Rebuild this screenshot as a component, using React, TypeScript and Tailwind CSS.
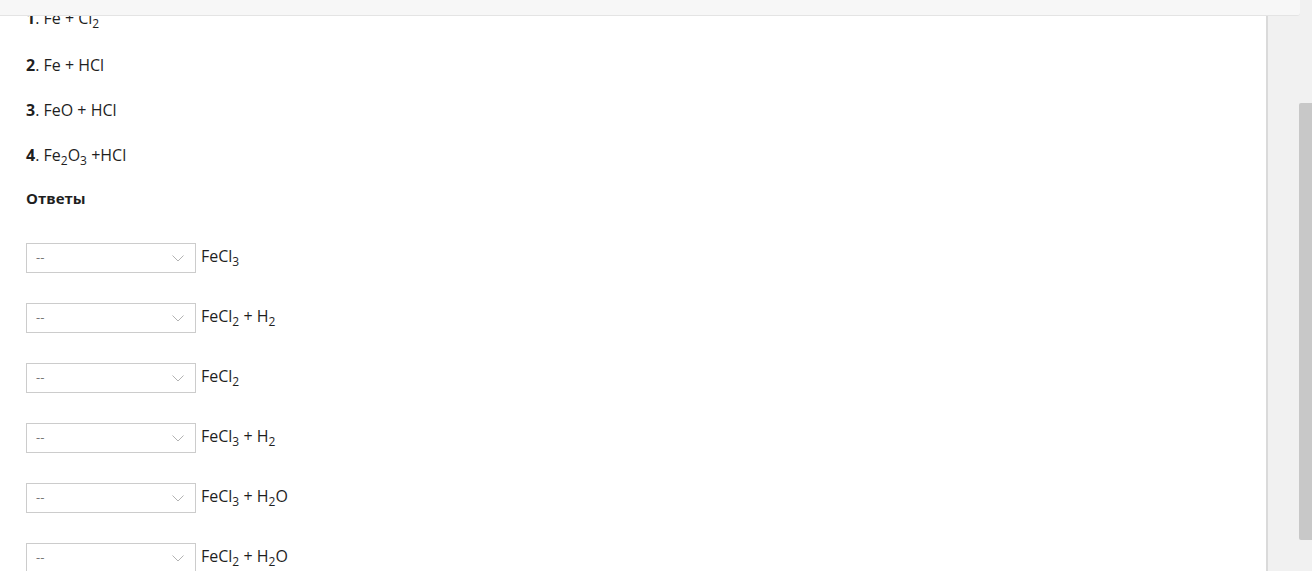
const QUESTIONS: { n: number; parts: (string | [string])[] }[] = [
  { n: 1, parts: ['Fe + Cl', ['2']] },
  { n: 2, parts: ['Fe + HCl'] },
  { n: 3, parts: ['FeO + HCl'] },
  { n: 4, parts: ['Fe', ['2'], 'O', ['3'], ' +HCl'] },
];

const ANSWERS: (string | [string])[][] = [
  ['FeCl', ['3']],
  ['FeCl', ['2'], ' + H', ['2']],
  ['FeCl', ['2']],
  ['FeCl', ['3'], ' + H', ['2']],
  ['FeCl', ['3'], ' + H', ['2'], 'O'],
  ['FeCl', ['2'], ' + H', ['2'], 'O'],
];

function Formula({ parts }: { parts: (string | [string])[] }) {
  return (
    <>
      {parts.map((p, i) =>
        typeof p === 'string' ? (
          <span key={i} className="whitespace-pre">{p}</span>
        ) : (
          <span key={i} className="text-[12px] relative top-[4px]">{p[0]}</span>
        )
      )}
    </>
  );
}

function Chevron() {
  return (
    <svg width="12" height="7" viewBox="0 0 12 7" fill="none" className="shrink-0">
      <path d="M0.5 0.5 L6 6 L11.5 0.5" stroke="#b3b3b3" strokeWidth="1" />
    </svg>
  );
}

export default function App() {
  return (
    <div className="relative h-[571px] overflow-hidden flex bg-white text-[#1f1f1f]" style={{ fontFamily: '"Open Sans", "Liberation Sans", sans-serif' }}>
      <div className="absolute top-0 left-0 w-[1300px] h-[16px] bg-[#f7f7f7] border-b border-[#e4e4e4] rounded-br-[3px] z-10" />

      <main className="w-[1266px] shrink-0 pl-[26px] pt-[6px]">
        {QUESTIONS.map((q) => (
          <p key={q.n} className="text-[16px] leading-[24px] mb-[21px]">
            <b className="font-bold">{q.n}</b>. <Formula parts={q.parts} />
          </p>
        ))}
        <h3 className="text-[15px] leading-[24px] font-bold -mt-[4px] mb-[33px]">Ответы</h3>
        <div className="flex flex-col gap-[30px]">
          {ANSWERS.map((a, i) => (
            <div key={i} className="flex items-center h-[30px]">
              <div className="w-[170px] h-[30px] border border-[#cccccc] bg-white flex items-center justify-between pl-[9px] pr-[11px]">
                <span className="text-[13px] text-[#777]">--</span>
                <Chevron />
              </div>
              <span className="ml-[5px] text-[16px] leading-[24px] -mt-[2px]">
                <Formula parts={a} />
              </span>
            </div>
          ))}
        </div>
      </main>

      <aside className="flex-1 flex bg-[#f1f1f1] border-l-2 border-[#dadada]">
        <div className="ml-auto pt-[103px]">
          <div className="w-[13px] h-[437px] bg-[#c8c8c8] rounded-tl-[2px] rounded-bl-[2px]" />
        </div>
      </aside>
    </div>
  );
}
